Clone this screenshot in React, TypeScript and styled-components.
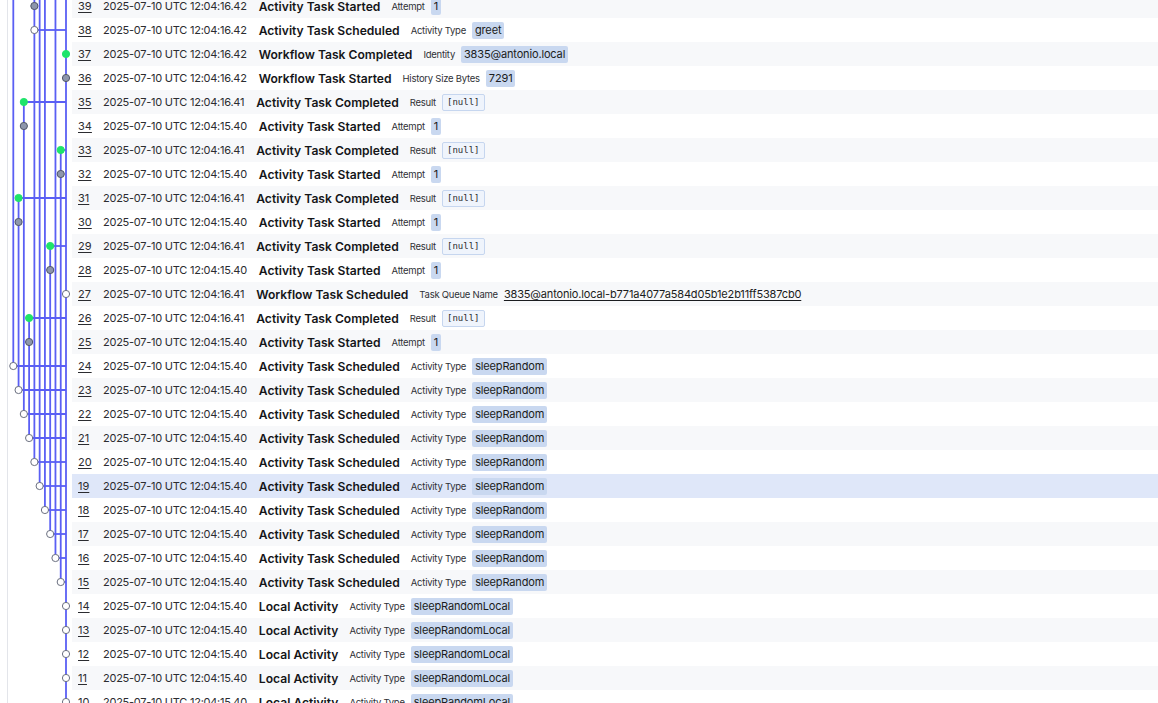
import React from "react";
import styled, { createGlobalStyle, css } from "styled-components";

const Global = createGlobalStyle`
  html, body { margin: 0; padding: 0; height: 703px; overflow: hidden; background: #ffffff; }
  body { font-family: Inter, "Noto Sans", sans-serif; color: #1f2024; }
  #root { height: 703px; }
`;

type NodeKind = "started" | "scheduled" | "completed";
type ValueKind = "badge" | "null" | "link";

interface EventRow {
  id: number;
  time: string;
  name: string;
  label: string;
  value: string;
  kind: ValueKind;
  lane: number;
  node: NodeKind;
  connect: boolean;
}

const T1 = "2025-07-10 UTC 12:04:16.42";
const T2 = "2025-07-10 UTC 12:04:16.41";
const T3 = "2025-07-10 UTC 12:04:15.40";

const rows: EventRow[] = [
  { id: 39, time: T1, name: "Activity Task Started", label: "Attempt", value: "1", kind: "badge", lane: 4, node: "started", connect: false },
  { id: 38, time: T1, name: "Activity Task Scheduled", label: "Activity Type", value: "greet", kind: "badge", lane: 4, node: "scheduled", connect: true },
  { id: 37, time: T1, name: "Workflow Task Completed", label: "Identity", value: "3835@antonio.local", kind: "badge", lane: 10, node: "completed", connect: false },
  { id: 36, time: T1, name: "Workflow Task Started", label: "History Size Bytes", value: "7291", kind: "badge", lane: 10, node: "started", connect: false },
  { id: 35, time: T2, name: "Activity Task Completed", label: "Result", value: "[null]", kind: "null", lane: 2, node: "completed", connect: true },
  { id: 34, time: T3, name: "Activity Task Started", label: "Attempt", value: "1", kind: "badge", lane: 2, node: "started", connect: false },
  { id: 33, time: T2, name: "Activity Task Completed", label: "Result", value: "[null]", kind: "null", lane: 9, node: "completed", connect: true },
  { id: 32, time: T3, name: "Activity Task Started", label: "Attempt", value: "1", kind: "badge", lane: 9, node: "started", connect: false },
  { id: 31, time: T2, name: "Activity Task Completed", label: "Result", value: "[null]", kind: "null", lane: 1, node: "completed", connect: true },
  { id: 30, time: T3, name: "Activity Task Started", label: "Attempt", value: "1", kind: "badge", lane: 1, node: "started", connect: false },
  { id: 29, time: T2, name: "Activity Task Completed", label: "Result", value: "[null]", kind: "null", lane: 7, node: "completed", connect: true },
  { id: 28, time: T3, name: "Activity Task Started", label: "Attempt", value: "1", kind: "badge", lane: 7, node: "started", connect: false },
  { id: 27, time: T2, name: "Workflow Task Scheduled", label: "Task Queue Name", value: "3835@antonio.local-b771a4077a584d05b1e2b11ff5387cb0", kind: "link", lane: 10, node: "scheduled", connect: false },
  { id: 26, time: T2, name: "Activity Task Completed", label: "Result", value: "[null]", kind: "null", lane: 3, node: "completed", connect: true },
  { id: 25, time: T3, name: "Activity Task Started", label: "Attempt", value: "1", kind: "badge", lane: 3, node: "started", connect: false },
  ...[24, 23, 22, 21, 20, 19, 18, 17, 16, 15].map((id, i) => ({
    id, time: T3, name: "Activity Task Scheduled", label: "Activity Type", value: "sleepRandom",
    kind: "badge" as ValueKind, lane: i, node: "scheduled" as NodeKind, connect: true,
  })),
  ...[14, 13, 12, 11, 10].map((id) => ({
    id, time: T3, name: "Local Activity", label: "Activity Type", value: "sleepRandomLocal",
    kind: "badge" as ValueKind, lane: 10, node: "scheduled" as NodeKind, connect: false,
  })),
];

const ROW_H = 24;
const TOP_ID = 39;
const GRAPH_W = 64;
const laneX = (lane: number) => 5.3 + lane * 5.27;
const rowY = (id: number) => (TOP_ID - id) * ROW_H + ROW_H / 2;

// vertical lane spans: [lane, lower event id, upper event id | null = runs off the top]
const spans: [number, number, number | null][] = [
  [0, 24, null],
  [1, 23, 31],
  [2, 22, 35],
  [3, 21, 26],
  [4, 20, null],
  [5, 19, null],
  [6, 18, null],
  [7, 17, 29],
  [8, 16, null],
  [9, 15, 33],
];

const LINE = "#5a5ff4";

const nodeStyle: Record<NodeKind, { fill: string; stroke: string }> = {
  started: { fill: "#8d96ab", stroke: "#4f5566" },
  scheduled: { fill: "#ffffff", stroke: "#6b7080" },
  completed: { fill: "#1ee46a", stroke: "#1ee46a" },
};

const Page = styled.div`
  height: 703px;
  overflow: hidden;
  margin-left: 7px;
  border-left: 1px solid #e3e5ea;
`;

const Timeline = styled.div`
  display: flex;
  margin-top: -6px;
`;

const Graph = styled.svg`
  flex: 0 0 ${GRAPH_W}px;
  display: block;
`;

const List = styled.div`
  flex: 1;
  display: flex;
  flex-direction: column;
`;

const Row = styled.div<{ $tone: "plain" | "stripe" | "active" }>`
  height: ${ROW_H}px;
  display: flex;
  align-items: center;
  white-space: nowrap;
  background: ${(p) =>
    p.$tone === "active" ? "#dfe7f9" : p.$tone === "stripe" ? "#f7f8fa" : "#ffffff"};
`;

const Num = styled.a`
  flex: 0 0 25px;
  padding-left: 6px;
  font-size: 11px;
  color: #2b2c30;
  text-decoration: underline;
  text-underline-offset: 2px;
`;

const Time = styled.span`
  font-size: 11px;
  letter-spacing: -0.25px;
  color: #2b2c30;
  margin-right: 12px;
`;

const Name = styled.span`
  font-size: 12.1px;
  font-weight: 600;
  color: #141518;
  margin-right: 11px;
`;

const Label = styled.span`
  font-size: 9.5px;
  letter-spacing: -0.25px;
  color: #2f3136;
  margin-right: 6px;
`;

const valueBase = css`
  display: inline-flex;
  align-items: center;
  border-radius: 2px;
`;

const Badge = styled.span`
  ${valueBase};
  height: 17px;
  padding: 0 3px;
  font-size: 11px;
  letter-spacing: -0.15px;
  color: #1b1c20;
  background: #c9d8f0;
`;

const NullBadge = styled.span`
  ${valueBase};
  height: 15px;
  padding: 0 4px;
  font-family: "DejaVu Sans Mono", "Liberation Mono", monospace;
  font-size: 9px;
  color: #2b2c30;
  background: #eff4fc;
  border: 1px solid #c6d6ef;
`;

const Link = styled.a`
  font-size: 11px;
  letter-spacing: -0.15px;
  color: #1b1c20;
  text-decoration: underline;
  text-underline-offset: 2px;
`;

function Value({ row }: { row: EventRow }) {
  if (row.kind === "null") return <NullBadge>{row.value}</NullBadge>;
  if (row.kind === "link") return <Link>{row.value}</Link>;
  return <Badge>{row.value}</Badge>;
}

function TimelineGraph() {
  const h = rows.length * ROW_H;
  const main = laneX(10);
  return (
    <Graph width={GRAPH_W} height={h} viewBox={`0 0 ${GRAPH_W} ${h}`}>
      <line x1={main} y1={0} x2={main} y2={h} stroke={LINE} strokeWidth={1.8} />
      {spans.map(([lane, from, to]) => (
        <line
          key={lane}
          x1={laneX(lane)}
          x2={laneX(lane)}
          y1={to === null ? 0 : rowY(to)}
          y2={rowY(from)}
          stroke={LINE}
          strokeWidth={1.8}
        />
      ))}
      {rows
        .filter((r) => r.connect)
        .map((r) => (
          <line
            key={`h${r.id}`}
            x1={laneX(r.lane)}
            x2={main}
            y1={rowY(r.id)}
            y2={rowY(r.id)}
            stroke={LINE}
            strokeWidth={1.8}
          />
        ))}
      {rows.map((r) => {
        const s = nodeStyle[r.node];
        return (
          <circle
            key={`c${r.id}`}
            cx={laneX(r.lane)}
            cy={rowY(r.id)}
            r={3.6}
            fill={s.fill}
            stroke={s.stroke}
            strokeWidth={1}
          />
        );
      })}
    </Graph>
  );
}

export default function App() {
  return (
    <>
      <Global />
      <Page>
        <Timeline>
          <TimelineGraph />
          <List>
            {rows.map((r) => (
              <Row
                key={r.id}
                $tone={r.id === 19 ? "active" : r.id % 2 === 1 ? "stripe" : "plain"}
              >
                <Num>{r.id}</Num>
                <Time>{r.time}</Time>
                <Name>{r.name}</Name>
                <Label>{r.label}</Label>
                <Value row={r} />
              </Row>
            ))}
          </List>
        </Timeline>
      </Page>
    </>
  );
}
